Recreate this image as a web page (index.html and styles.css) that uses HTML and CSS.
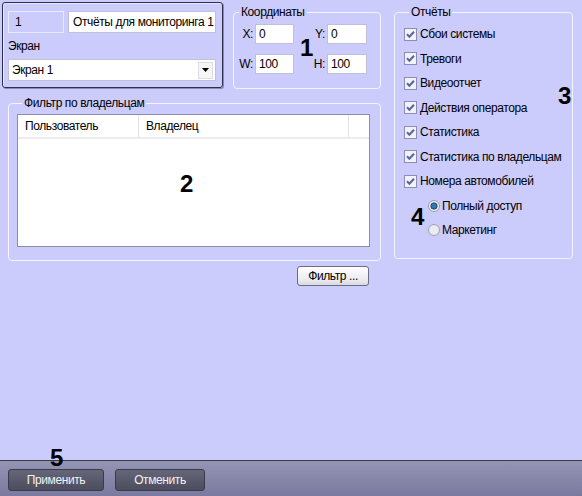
FILE: index.html
```html
<!DOCTYPE html>
<html lang="ru">
<head>
<meta charset="utf-8">
<title>Отчёты для мониторинга</title>
<link rel="stylesheet" href="styles.css">
</head>
<body>
<div class="page">
  <div class="content">
    <div class="leftcol">
      <div class="toprow">
        <div class="idbox">
          <div class="idrow">
            <div class="field field-id">1</div>
            <div class="field field-name">Отчёты для мониторинга 1</div>
          </div>
          <div class="lbl">Экран</div>
          <div class="field select">
            <span>Экран 1</span>
            <span class="drop"><svg width="7" height="4" viewBox="0 0 7 4"><path d="M0 0H7L3.5 4Z" fill="#000"/></svg></span>
          </div>
        </div>
        <fieldset class="group coords">
          <legend>Координаты</legend>
          <div class="cgrid">
            <span class="cl">X:</span><div class="field cf">0</div>
            <span class="cl">Y:</span><div class="field cf">0</div>
            <span class="cl">W:</span><div class="field cf">100</div>
            <span class="cl">H:</span><div class="field cf">100</div>
          </div>
        </fieldset>
      </div>
      <fieldset class="group filter">
        <legend>Фильтр по владельцам</legend>
        <div class="table">
          <div class="thead">
            <div class="th th1">Пользователь</div>
            <div class="th th2">Владелец</div>
            <div class="th th3"></div>
          </div>
        </div>
      </fieldset>
      <div class="btnrow"><div class="xpbtn">Фильтр ...</div></div>
    </div>
    <fieldset class="group reports">
      <legend>Отчёты</legend>
      <div class="cb"><svg class="box" width="13" height="13" viewBox="0 0 13 13"><rect x="0.5" y="0.5" width="12" height="12" fill="#f2f2f8" stroke="#8c8cb4"/><path d="M3 6.3L5.4 8.8L10 3.8" fill="none" stroke="#5866a8" stroke-width="2"/></svg><span>Сбои системы</span></div>
      <div class="cb"><svg class="box" width="13" height="13" viewBox="0 0 13 13"><rect x="0.5" y="0.5" width="12" height="12" fill="#f2f2f8" stroke="#8c8cb4"/><path d="M3 6.3L5.4 8.8L10 3.8" fill="none" stroke="#5866a8" stroke-width="2"/></svg><span>Тревоги</span></div>
      <div class="cb"><svg class="box" width="13" height="13" viewBox="0 0 13 13"><rect x="0.5" y="0.5" width="12" height="12" fill="#f2f2f8" stroke="#8c8cb4"/><path d="M3 6.3L5.4 8.8L10 3.8" fill="none" stroke="#5866a8" stroke-width="2"/></svg><span>Видеоотчет</span></div>
      <div class="cb"><svg class="box" width="13" height="13" viewBox="0 0 13 13"><rect x="0.5" y="0.5" width="12" height="12" fill="#f2f2f8" stroke="#8c8cb4"/><path d="M3 6.3L5.4 8.8L10 3.8" fill="none" stroke="#5866a8" stroke-width="2"/></svg><span>Действия оператора</span></div>
      <div class="cb"><svg class="box" width="13" height="13" viewBox="0 0 13 13"><rect x="0.5" y="0.5" width="12" height="12" fill="#f2f2f8" stroke="#8c8cb4"/><path d="M3 6.3L5.4 8.8L10 3.8" fill="none" stroke="#5866a8" stroke-width="2"/></svg><span>Статистика</span></div>
      <div class="cb"><svg class="box" width="13" height="13" viewBox="0 0 13 13"><rect x="0.5" y="0.5" width="12" height="12" fill="#f2f2f8" stroke="#8c8cb4"/><path d="M3 6.3L5.4 8.8L10 3.8" fill="none" stroke="#5866a8" stroke-width="2"/></svg><span>Статистика по владельцам</span></div>
      <div class="cb"><svg class="box" width="13" height="13" viewBox="0 0 13 13"><rect x="0.5" y="0.5" width="12" height="12" fill="#f2f2f8" stroke="#8c8cb4"/><path d="M3 6.3L5.4 8.8L10 3.8" fill="none" stroke="#5866a8" stroke-width="2"/></svg><span>Номера автомобилей</span></div>
      <div class="rb"><svg class="dot" width="12" height="12" viewBox="0 0 12 12"><circle cx="6" cy="6" r="5.5" fill="#f0f0f4" stroke="#9a9ab0"/><circle cx="6" cy="6" r="3.2" fill="#2f78b0" stroke="#123a5e" stroke-width="0.8"/></svg><span>Полный доступ</span></div>
      <div class="rb"><svg class="dot" width="12" height="12" viewBox="0 0 12 12"><circle cx="6" cy="6" r="5.5" fill="#ececf0" stroke="#a0a0b4"/></svg><span>Маркетинг</span></div>
    </fieldset>
  </div>
  <div class="bar">
    <div class="darkbtn apply">Применить</div>
    <div class="darkbtn cancel">Отменить</div>
  </div>
  <span class="note n1">1</span>
  <span class="note n2">2</span>
  <span class="note n3">3</span>
  <span class="note n4">4</span>
  <span class="note n5">5</span>
</div>
</body>
</html>
```
FILE: styles.css
```css
html, body {
  margin: 0;
  padding: 0;
}
body {
  background: #ccccfc;
  font-family: "Liberation Sans", Arial, sans-serif;
  font-size: 12px;
  letter-spacing: -0.4px;
  color: #000;
}
.page {
  position: relative;
  width: 582px;
  height: 496px;
  display: flex;
  flex-direction: column;
  overflow: hidden;
}
.content {
  flex: 1;
  display: flex;
  align-items: flex-start;
  padding: 2px 0 0 2px;
}
.leftcol {
  width: 384px;
  display: flex;
  flex-direction: column;
}
.toprow {
  display: flex;
  align-items: flex-start;
}
.idbox {
  box-sizing: border-box;
  width: 221px;
  height: 86px;
  border: 1px solid #30304a;
  border-radius: 3px;
  padding: 8px 0 0 5px;
  box-shadow: 1px 1px 0 #8a8aaa, inset 1px 1px 0 #e4e4ff;
}
.idrow {
  display: flex;
  gap: 4px;
}
.field {
  box-sizing: border-box;
  height: 22px;
  background: #fff;
  border: 1px solid #c0c0da;
  padding: 0 4px;
  line-height: 20px;
  white-space: nowrap;
}
.field-id {
  width: 56px;
  background: #ccccfc;
  border-color: #eaeaff;
  padding-left: 6px;
}
.field-name {
  width: 148px;
}
.lbl {
  height: 26px;
  line-height: 26px;
}
.select {
  width: 208px;
  display: flex;
  justify-content: space-between;
  align-items: center;
  padding: 0 2px 0 3px;
}
.drop {
  box-sizing: border-box;
  width: 15px;
  height: 17px;
  background: #f6f6f6;
  border: 1px solid #dcdce6;
  display: flex;
  align-items: center;
  justify-content: center;
}
.group {
  margin: 0;
  padding: 0;
  min-width: 0;
  box-sizing: border-box;
  border: 1px solid #f4f4ff;
  border-radius: 4px;
}
.group legend {
  padding: 0 2px;
  margin-left: 5px;
  line-height: 14px;
}
.coords {
  width: 148px;
  height: 84px;
  margin: 3px 0 0 10px;
}
.cgrid {
  display: grid;
  grid-template-columns: 18px 39px 33px 40px;
  grid-auto-rows: 20px;
  row-gap: 10px;
  padding: 5px 0 0 3px;
}
.cl {
  text-align: right;
  padding-right: 2px;
  line-height: 20px;
}
.cf {
  height: 20px;
  line-height: 18px;
  padding: 0 3px;
}
.filter {
  width: 373px;
  height: 165px;
  margin: 7px 0 0 6px;
  padding: 4px 11px 0 8px;
}
.table {
  box-sizing: border-box;
  width: 353px;
  height: 133px;
  background: #fff;
  border: 1px solid #8c8cb0;
}
.thead {
  display: flex;
  height: 24px;
  border-bottom: 2px solid #ececf0;
  box-sizing: border-box;
}
.th {
  box-sizing: border-box;
  line-height: 22px;
  padding-left: 7px;
  border-right: 1px solid #e2e2e8;
}
.th1 { width: 121px; }
.th2 { width: 210px; }
.th3 { flex: 1; border-right: 0; }
.btnrow {
  display: flex;
  justify-content: flex-end;
  margin: 5px 17px 0 0;
}
.xpbtn {
  box-sizing: border-box;
  width: 72px;
  height: 20px;
  line-height: 18px;
  text-align: center;
  border: 1px solid #6c6c80;
  border-radius: 3px;
  background: linear-gradient(#ffffff, #ececf0 70%, #d8d8e0);
}
.reports {
  width: 179px;
  height: 254px;
  margin: 3px 0 0 8px;
  padding: 3px 0 0 9px;
}
.cb, .rb {
  height: 24.5px;
  display: flex;
  align-items: center;
  gap: 3px;
  white-space: nowrap;
}
.rb {
  padding-left: 24px;
  gap: 2px;
}
.box, .dot {
  flex: none;
}
.bar {
  box-sizing: border-box;
  height: 36px;
  border-top: 1px solid #3a3a4a;
  background: linear-gradient(#9494b4, #7a7aa0);
  display: flex;
  gap: 11px;
  padding: 8px 0 0 8px;
}
.darkbtn {
  box-sizing: border-box;
  height: 22px;
  line-height: 20px;
  text-align: center;
  color: #f2f2f2;
  border: 1px solid #3a3a4a;
  border-radius: 3px;
  background: linear-gradient(#66667a, #4c4c5e);
}
.apply { width: 96px; }
.cancel { width: 90px; }
.note {
  position: absolute;
  font-family: "Liberation Sans", Arial, sans-serif;
  font-weight: bold;
  font-size: 24px;
  line-height: 24px;
  letter-spacing: 0;
}
.n1 { left: 300px; top: 36px; }
.n2 { left: 180px; top: 172px; }
.n3 { left: 558px; top: 84px; }
.n4 { left: 411px; top: 205px; }
.n5 { left: 50px; top: 446px; }
```
